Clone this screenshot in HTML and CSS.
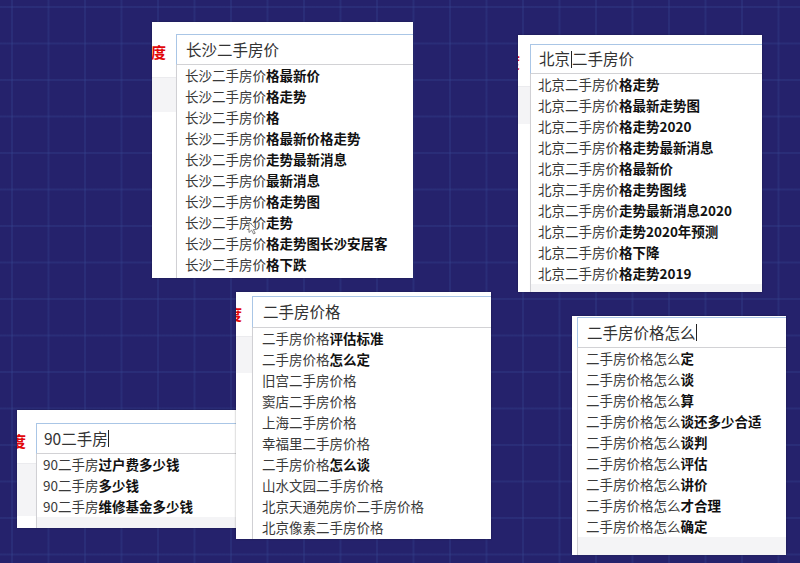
FILE: index.html
```html
<!DOCTYPE html>
<html lang="zh-CN">
<head>
<meta charset="utf-8">
<title>二手房价 搜索联想</title>
<link rel="stylesheet" href="styles.css">
</head>
<body>
<div class="desk">

  <div class="card c1">
    <div class="side">
      <div class="brand"><span>度</span></div>
      <div class="band"></div>
    </div>
    <div class="main">
      <div class="input">长沙二手房价</div>
      <div class="drop">
        <ul class="list">
          <li><span class="p">长沙二手房价</span><b>格最新价</b></li>
          <li><span class="p">长沙二手房价</span><b>格走势</b></li>
          <li><span class="p">长沙二手房价</span><b>格</b></li>
          <li><span class="p">长沙二手房价</span><b>格最新价格走势</b></li>
          <li><span class="p">长沙二手房价</span><b>走势最新消息</b></li>
          <li><span class="p">长沙二手房价</span><b>最新消息</b></li>
          <li><span class="p">长沙二手房价</span><b>格走势图</b></li>
          <li><span class="p">长沙二手房价</span><b>走势</b></li>
          <li><span class="p">长沙二手房价</span><b>格走势图长沙安居客</b></li>
          <li><span class="p">长沙二手房价</span><b>格下跌</b></li>
        </ul>
        <div class="foot"></div>
      </div>
    </div>
    <svg class="pointer" width="10" height="14" viewBox="0 0 10 14"><path d="M1 1 L1 11.5 L3.6 9.2 L5.6 13 L7.2 12.2 L5.3 8.6 L8.6 8.4 Z" fill="#fff" stroke="#777" stroke-width="0.9" stroke-linejoin="round"/></svg>
  </div>

  <div class="card c2">
    <div class="side">
      <div class="brand"><span>度</span></div>
      <div class="band"></div>
    </div>
    <div class="main">
      <div class="input">北京<span class="caret"></span>二手房价</div>
      <div class="drop">
        <ul class="list">
          <li><span class="p">北京二手房价</span><b>格走势</b></li>
          <li><span class="p">北京二手房价</span><b>格最新走势图</b></li>
          <li><span class="p">北京二手房价</span><b>格走势2020</b></li>
          <li><span class="p">北京二手房价</span><b>格走势最新消息</b></li>
          <li><span class="p">北京二手房价</span><b>格最新价</b></li>
          <li><span class="p">北京二手房价</span><b>格走势图线</b></li>
          <li><span class="p">北京二手房价</span><b>走势最新消息2020</b></li>
          <li><span class="p">北京二手房价</span><b>走势2020年预测</b></li>
          <li><span class="p">北京二手房价</span><b>格下降</b></li>
          <li><span class="p">北京二手房价</span><b>格走势2019</b></li>
        </ul>
        <div class="foot"></div>
      </div>
    </div>
  </div>

  <div class="card c4">
    <div class="side">
      <div class="brand"><span>度</span></div>
      <div class="band"></div>
    </div>
    <div class="main">
      <div class="input">90二手房<span class="caret"></span></div>
      <div class="drop">
        <ul class="list">
          <li><span class="p">90二手房</span><b>过户费多少钱</b></li>
          <li><span class="p">90二手房</span><b>多少钱</b></li>
          <li><span class="p">90二手房</span><b>维修基金多少钱</b></li>
        </ul>
        <div class="foot"></div>
      </div>
    </div>
  </div>

  <div class="card c3">
    <div class="side">
      <div class="brand"><span>度</span></div>
      <div class="band"></div>
    </div>
    <div class="main">
      <div class="input">二手房价格</div>
      <div class="drop">
        <ul class="list">
          <li><span class="p">二手房价格</span><b>评估标准</b></li>
          <li><span class="p">二手房价格</span><b>怎么定</b></li>
          <li><span class="p">旧宫二手房价格</span></li>
          <li><span class="p">窦店二手房价格</span></li>
          <li><span class="p">上海二手房价格</span></li>
          <li><span class="p">幸福里二手房价格</span></li>
          <li><span class="p">二手房价格</span><b>怎么谈</b></li>
          <li><span class="p">山水文园二手房价格</span></li>
          <li><span class="p">北京天通苑房价二手房价格</span></li>
          <li><span class="p">北京像素二手房价格</span></li>
        </ul>
        <div class="foot"></div>
      </div>
    </div>
  </div>

  <div class="card c5">
    <div class="side">
      <div class="band"></div>
    </div>
    <div class="main">
      <div class="input">二手房价格怎么<span class="caret"></span></div>
      <div class="drop">
        <ul class="list">
          <li><span class="p">二手房价格怎么</span><b>定</b></li>
          <li><span class="p">二手房价格怎么</span><b>谈</b></li>
          <li><span class="p">二手房价格怎么</span><b>算</b></li>
          <li><span class="p">二手房价格怎么</span><b>谈还多少合适</b></li>
          <li><span class="p">二手房价格怎么</span><b>谈判</b></li>
          <li><span class="p">二手房价格怎么</span><b>评估</b></li>
          <li><span class="p">二手房价格怎么</span><b>讲价</b></li>
          <li><span class="p">二手房价格怎么</span><b>才合理</b></li>
          <li><span class="p">二手房价格怎么</span><b>确定</b></li>
        </ul>
        <div class="foot"></div>
      </div>
    </div>
  </div>

</div>
</body>
</html>
```
FILE: styles.css
```css
html, body {
  margin: 0;
  padding: 0;
}
body {
  width: 800px;
  height: 563px;
  overflow: hidden;
  background-color: #25226c;
  background-image:
    linear-gradient(90deg, rgba(55, 75, 150, 0.28) 2px, transparent 2px),
    linear-gradient(180deg, rgba(55, 75, 150, 0.28) 2px, transparent 2px);
  background-size: 36.5px 36.5px;
  background-position: 11px 6px;
  font-family: "Noto Sans CJK SC", "Noto Sans", sans-serif;
}
.desk {
  position: relative;
  width: 800px;
  height: 563px;
}

/* screenshot cards placed on the canvas */
.card {
  position: absolute;
  display: flex;
  background: #fff;
  overflow: hidden;
  box-sizing: border-box;
  box-shadow: 0 0 2px rgba(0, 0, 0, 0.35);
}
.c1 { left: 152px; top: 22px; width: 261px; height: 256px; padding-top: 12px; }
.c2 { left: 518px; top: 35px; width: 244px; height: 257px; padding-top: 9px; }
.c3 { left: 236px; top: 292px; width: 255px; height: 247px; padding-top: 4px; z-index: 2; }
.c4 { left: 17px; top: 410px; width: 230px; height: 118px; padding-top: 13px; z-index: 1; }
.c5 { left: 572px; top: 316px; width: 214px; height: 239px; padding-top: 1px; }

.side {
  flex: none;
  display: flex;
  flex-direction: column;
}
.c1 .side { width: 24px; }
.c2 .side { width: 12px; }
.c3 .side { width: 16px; }
.c4 .side { width: 19px; }
.c5 .side { width: 5px; }

.brand {
  height: 31px;
  display: flex;
  justify-content: flex-end;
  align-items: center;
  overflow: hidden;
  padding-right: 10px;
  color: #e1080a;
  font-size: 15px;
  font-weight: 700;
  white-space: nowrap;
  line-height: 1;
  padding-top: 3px;
  box-sizing: border-box;
}
.brand span { flex: none; }

.band {
  background: #f4f4f6;
  border-top: 1px solid #ebebee;
}
.c1 .band { margin-top: 12px; height: 34px; }
.c2 .band { margin-top: 11px; height: 37px; }
.c3 .band { margin-top: 9px; height: 36px; }
.c4 .band { margin-top: 9px; height: 52px; }
.c5 .band { display: none; }

.main {
  flex: none;
  width: 320px;
  display: flex;
  flex-direction: column;
}

.input {
  box-sizing: border-box;
  height: 31px;
  padding-left: 9px;
  display: flex;
  align-items: center;
  border: 1px solid #aac6e6;
  border-right: none;
  border-bottom-color: #d3d3d6;
  font-size: 15.5px;
  color: #333;
  white-space: nowrap;
  line-height: 1;
}
.c2 .input { height: 30px; padding-left: 8px; }
.c3 .input { height: 32px; padding-left: 10px; }
.c4 .input { padding-left: 7px; }

.caret {
  display: inline-block;
  width: 0;
  height: 17px;
  border-left: 1px solid #222;
  margin: 0 0.5px;
}

.drop {
  flex: 1;
  display: flex;
  flex-direction: column;
  border-left: 1px solid #d0d0d4;
  box-shadow: 1px 1px 2px rgba(0, 0, 0, 0.08);
}
.list {
  list-style: none;
  margin: 0;
  padding: 0;
}
.list li {
  height: 21px;
  line-height: 21px;
  padding-left: 8px;
  font-size: 13.5px;
  white-space: nowrap;
  color: #000;
}
.c2 .list li { padding-left: 7px; }
.c3 .list li { padding-left: 9px; }
.c4 .list li { padding-left: 6px; }
.list .p {
  color: #3a3a3a;
  font-weight: 400;
}
.list b {
  color: #111;
  font-weight: 700;
}
.foot {
  flex: 1;
  background: #f4f4f6;
}
.c1 .foot, .c3 .foot { background: #fff; }

.pointer {
  position: absolute;
  left: 96px;
  top: 199px;
}
```
